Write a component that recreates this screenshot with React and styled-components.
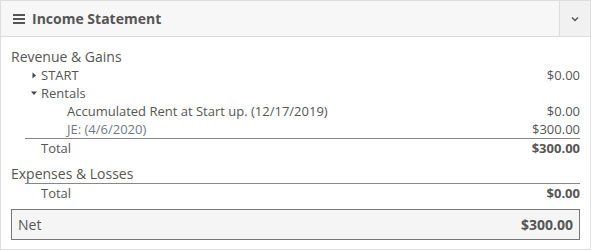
import styled, { createGlobalStyle } from "styled-components";

const GlobalStyle = createGlobalStyle`
  body {
    margin: 0;
    font-family: "Open Sans", "Liberation Sans", sans-serif;
    color: #555;
    background: #fff;
  }
`;

const Panel = styled.div`
  width: 591px;
  height: 250px;
  box-sizing: border-box;
  border: 1px solid #ddd;
  display: flex;
  flex-direction: column;
`;

const Header = styled.div`
  display: flex;
  height: 35px;
  background: #f7f7f7;
  border-bottom: 1px solid #ddd;
`;

const Title = styled.div`
  flex: 1;
  display: flex;
  align-items: center;
  gap: 6px;
  padding-left: 12px;
  font-size: 14px;
  font-weight: 700;
  color: #555;
`;

const MenuButton = styled.div`
  width: 30px;
  border-left: 1px solid #ddd;
  background: #f1f1f1;
  display: flex;
  align-items: center;
  justify-content: center;
`;

const Body = styled.div`
  padding: 11px 10px 0;
`;

const Section = styled.div`
  margin-bottom: 7px;

  & + & {
    margin-top: 8px;
  }
`;

const SectionTitle = styled.div`
  font-size: 14px;
  line-height: 18px;
`;

const Row = styled.div`
  display: flex;
  align-items: center;
  height: 18px;
  font-size: 13px;
  padding-left: ${(p) => p.$indent}px;
  color: #555;
`;

const Caret = styled.span`
  width: 10px;
  display: inline-flex;
  align-items: center;
`;

const Label = styled.span`
  flex: 1;
  color: ${(p) => (p.$muted ? "#6f7787" : "inherit")};
`;

const Amount = styled.span`
  font-weight: ${(p) => (p.$bold ? 700 : 400)};
`;

const TotalRow = styled(Row)`
  margin-left: 14px;
  padding-left: 16px;
  height: 18px;
  border-top: 1px solid #888;
`;

const NetBox = styled.div`
  display: flex;
  align-items: center;
  height: 29px;
  padding: 0 6px;
  border: 1px solid #777;
  background: #f5f5f5;
  font-size: 14px;
`;

function Bars() {
  return (
    <svg width="13" height="12" viewBox="0 0 13 12">
      <rect x="0" y="1" width="12" height="2" fill="#555" />
      <rect x="0" y="5" width="12" height="2" fill="#555" />
      <rect x="0" y="9" width="12" height="2" fill="#555" />
    </svg>
  );
}

function Chevron() {
  return (
    <svg width="8" height="6" viewBox="0 0 8 6">
      <path d="M1 1.5 L4 4.5 L7 1.5" fill="none" stroke="#555" strokeWidth="1.4" />
    </svg>
  );
}

function Triangle({ open }) {
  return (
    <svg width="6" height="7" viewBox="0 0 6 7">
      {open ? (
        <path d="M0 1.5 L6 1.5 L3 5 Z" fill="#444" />
      ) : (
        <path d="M1.5 0.5 L5 3.5 L1.5 6.5 Z" fill="#444" />
      )}
    </svg>
  );
}

export default function App() {
  return (
    <>
      <GlobalStyle />
      <Panel>
        <Header>
          <Title>
            <Bars />
            Income Statement
          </Title>
          <MenuButton>
            <Chevron />
          </MenuButton>
        </Header>
        <Body>
          <Section>
            <SectionTitle>Revenue &amp; Gains</SectionTitle>
            <Row $indent={20}>
              <Caret>
                <Triangle />
              </Caret>
              <Label>START</Label>
              <Amount>$0.00</Amount>
            </Row>
            <Row $indent={20}>
              <Caret>
                <Triangle open />
              </Caret>
              <Label>Rentals</Label>
            </Row>
            <Row $indent={56}>
              <Label>Accumulated Rent at Start up. (12/17/2019)</Label>
              <Amount>$0.00</Amount>
            </Row>
            <Row $indent={56}>
              <Label $muted>JE: (4/6/2020)</Label>
              <Amount>$300.00</Amount>
            </Row>
            <TotalRow>
              <Label>Total</Label>
              <Amount $bold>$300.00</Amount>
            </TotalRow>
          </Section>
          <Section>
            <SectionTitle>Expenses &amp; Losses</SectionTitle>
            <TotalRow>
              <Label>Total</Label>
              <Amount $bold>$0.00</Amount>
            </TotalRow>
          </Section>
          <NetBox>
            <Label>Net</Label>
            <Amount $bold>$300.00</Amount>
          </NetBox>
        </Body>
      </Panel>
    </>
  );
}
